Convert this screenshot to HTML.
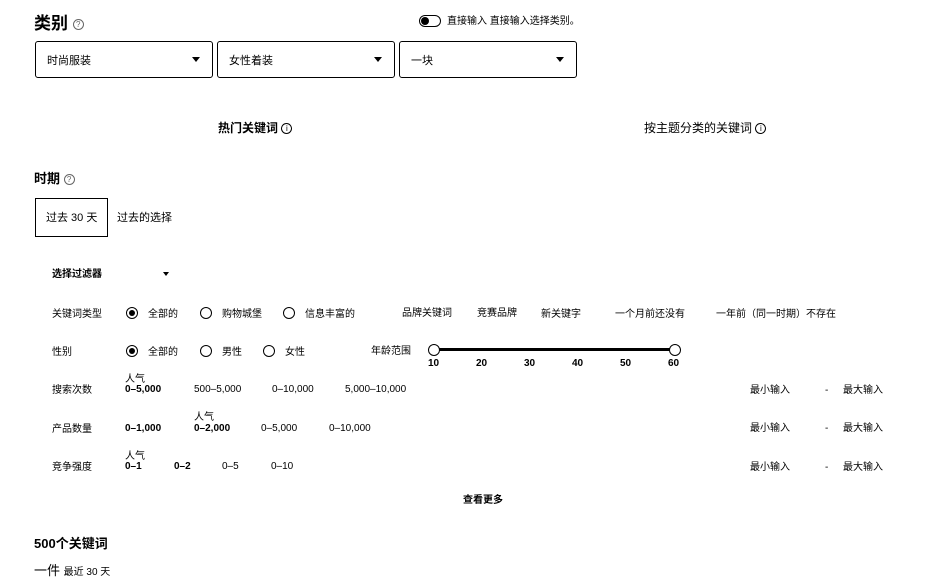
<!DOCTYPE html>
<html><head><meta charset="utf-8"><style>
*{margin:0;padding:0;box-sizing:border-box}
body{width:938px;height:581px;background:#fff;color:#000;font-family:"Liberation Sans","Noto Sans CJK SC",sans-serif;position:relative;overflow:hidden;font-size:10px;line-height:1}
.a{position:absolute;white-space:nowrap;line-height:1;padding-top:2px}
.dd{position:absolute;top:41px;height:37px;width:178px;border:1px solid #000;border-radius:3px;font-size:11px;line-height:1;padding:14px 0 0 11px}
.dd:after{content:"";position:absolute;right:12px;top:15px;border-left:4px solid transparent;border-right:4px solid transparent;border-top:5px solid #000}
.r{position:absolute;width:12px;height:12px;border:1px solid #000;border-radius:50%}
.r.on:after{content:"";position:absolute;left:2px;top:2px;width:6px;height:6px;border-radius:50%;background:#000}
.i{display:inline-block;width:11px;height:11px;border:1px solid #000;border-radius:50%;font-size:8px;line-height:9px;text-align:center;vertical-align:middle;font-weight:normal}
</style></head><body>
<div class="a" style="left:34px;top:13px;font-size:17px;font-weight:bold">类别 <span class="i" style="border-color:#666;color:#666">?</span></div>
<div class="a" style="left:419px;top:15px;width:22px;height:12px;border:1.5px solid #000;border-radius:6px;padding:0"></div>
<div class="a" style="left:421px;top:17px;width:8px;height:8px;border-radius:50%;background:#000;padding:0"></div>
<div class="a" style="left:447px;top:15px;font-size:10px">直接输入 直接输入选择类别。</div>
<div class="dd" style="left:35px">时尚服装</div>
<div class="dd" style="left:217px">女性着装</div>
<div class="dd" style="left:399px">一块</div>
<div class="a" style="left:218px;top:120px;font-size:12px;font-weight:bold">热门关键词 <span class="i">i</span></div>
<div class="a" style="left:644px;top:120px;font-size:12px">按主题分类的关键词 <span class="i">i</span></div>
<div class="a" style="left:34px;top:170px;font-size:13px;font-weight:bold">时期 <span class="i" style="border-color:#666;color:#666">?</span></div>
<div class="a" style="left:35px;top:198px;width:73px;height:39px;border:1px solid #000;padding:0"></div>
<div class="a" style="left:46px;top:211px;font-size:11px">过去 30 天</div>
<div class="a" style="left:117px;top:211px;font-size:11px">过去的选择</div>
<div class="a" style="left:52px;top:268px;font-weight:bold">选择过滤器</div>
<div class="a" style="left:163px;top:272px;border-left:3px solid transparent;border-right:3px solid transparent;border-top:4px solid #000;padding:0"></div>

<div class="a" style="left:52px;top:308px">关键词类型</div>
<div class="r on" style="left:126px;top:307px"></div><div class="a" style="left:148px;top:308px">全部的</div>
<div class="r" style="left:200px;top:307px"></div><div class="a" style="left:222px;top:308px">购物城堡</div>
<div class="r" style="left:283px;top:307px"></div><div class="a" style="left:305px;top:308px">信息丰富的</div>
<div class="a" style="left:402px;top:307px">品牌关键词</div>
<div class="a" style="left:477px;top:307px">竞赛品牌</div>
<div class="a" style="left:541px;top:308px">新关键字</div>
<div class="a" style="left:615px;top:308px">一个月前还没有</div>
<div class="a" style="left:716px;top:308px">一年前（同一时期）不存在</div>

<div class="a" style="left:52px;top:346px">性别</div>
<div class="r on" style="left:126px;top:345px"></div><div class="a" style="left:148px;top:346px">全部的</div>
<div class="r" style="left:200px;top:345px"></div><div class="a" style="left:222px;top:346px">男性</div>
<div class="r" style="left:263px;top:345px"></div><div class="a" style="left:285px;top:346px">女性</div>
<div class="a" style="left:371px;top:345px">年龄范围</div>
<div class="a" style="left:433px;top:348px;width:244px;height:3px;background:#000;padding:0"></div>
<div class="a" style="left:428px;top:344px;width:12px;height:12px;border:1px solid #000;border-radius:50%;background:#fff;padding:0"></div>
<div class="a" style="left:669px;top:344px;width:12px;height:12px;border:1px solid #000;border-radius:50%;background:#fff;padding:0"></div>
<div class="a" style="left:428px;top:357px;font-weight:bold">10</div>
<div class="a" style="left:476px;top:357px;font-weight:bold">20</div>
<div class="a" style="left:524px;top:357px;font-weight:bold">30</div>
<div class="a" style="left:572px;top:357px;font-weight:bold">40</div>
<div class="a" style="left:620px;top:357px;font-weight:bold">50</div>
<div class="a" style="left:668px;top:357px;font-weight:bold">60</div>

<div class="a" style="left:52px;top:384px">搜索次数</div>
<div class="a" style="left:125px;top:373px">人气</div>
<div class="a" style="left:125px;top:383px;font-weight:bold">0–5,000</div>
<div class="a" style="left:194px;top:383px">500–5,000</div>
<div class="a" style="left:272px;top:383px">0–10,000</div>
<div class="a" style="left:345px;top:383px">5,000–10,000</div>

<div class="a" style="left:52px;top:423px">产品数量</div>
<div class="a" style="left:125px;top:422px;font-weight:bold">0–1,000</div>
<div class="a" style="left:194px;top:411px">人气</div>
<div class="a" style="left:194px;top:422px;font-weight:bold">0–2,000</div>
<div class="a" style="left:261px;top:422px">0–5,000</div>
<div class="a" style="left:329px;top:422px">0–10,000</div>

<div class="a" style="left:52px;top:461px">竞争强度</div>
<div class="a" style="left:125px;top:450px">人气</div>
<div class="a" style="left:125px;top:460px;font-weight:bold">0–1</div>
<div class="a" style="left:174px;top:460px;font-weight:bold">0–2</div>
<div class="a" style="left:222px;top:460px">0–5</div>
<div class="a" style="left:271px;top:460px">0–10</div>

<div class="a" style="left:750px;top:384px">最小输入</div><div class="a" style="left:825px;top:384px">-</div><div class="a" style="left:843px;top:384px">最大输入</div>
<div class="a" style="left:750px;top:422px">最小输入</div><div class="a" style="left:825px;top:422px">-</div><div class="a" style="left:843px;top:422px">最大输入</div>
<div class="a" style="left:750px;top:461px">最小输入</div><div class="a" style="left:825px;top:461px">-</div><div class="a" style="left:843px;top:461px">最大输入</div>

<div class="a" style="left:463px;top:494px;font-weight:bold">查看更多</div>
<div class="a" style="left:34px;top:535px;font-size:13px;font-weight:bold">500个关键词</div>
<div class="a" style="left:34px;top:562px;font-size:13px">一件 <span style="font-size:10px">最近 30 天</span></div>
</body></html>
